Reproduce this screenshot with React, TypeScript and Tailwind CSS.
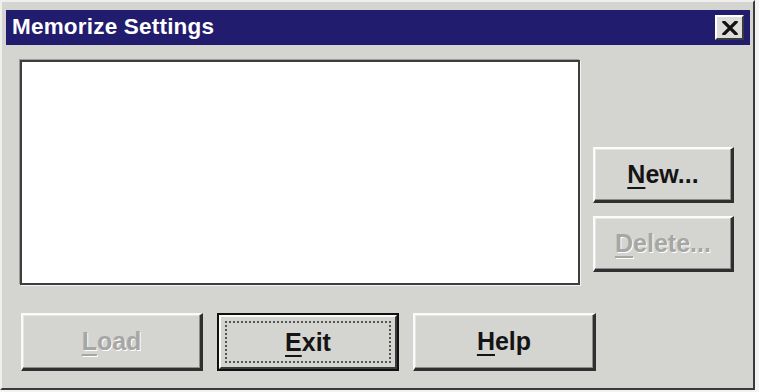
import React from "react";

const font = { fontFamily: '"Liberation Sans", Arial, sans-serif' };

function U({ ch }: { ch: string }) {
  return <span className="underline decoration-2 underline-offset-[4px]">{ch}</span>;
}

function Btn({
  first,
  rest,
  disabled,
  w,
  h,
}: {
  first: string;
  rest: string;
  disabled?: boolean;
  w: string;
  h: string;
}) {
  return (
    <div
      className={`${w} ${h} flex items-center justify-center bg-[#d4d4d0] border-t-2 border-l-2 border-t-[#fbfbfb] border-l-[#fbfbfb] border-r-[3px] border-b-[3px] border-r-[#2f2f2f] border-b-[#2f2f2f] shadow-[inset_-1px_-1px_0_#8c8c8c,inset_1px_1px_0_#e6e6e4]`}
    >
      <span
        className={`text-[25px] font-bold leading-none ${
          disabled ? "text-[#a6a6a4] [text-shadow:1px_1px_0_#ffffff]" : "text-[#141414]"
        }`}
        style={font}
      >
        <U ch={first} />
        {rest}
      </span>
    </div>
  );
}

export default function App() {
  return (
    <div className="w-[759px] h-[392px] bg-[#f3f3f1] overflow-hidden" style={font}>
      <div className="w-[755px] h-[390px] bg-[#d4d4d0] border-t-2 border-l-2 border-t-[#efefed] border-l-[#efefed] border-r-2 border-b-2 border-r-[#3a3a3a] border-b-[#3a3a3a] flex flex-col">
        {/* Title bar */}
        <div className="mt-[8px] ml-[4px] mr-[3px] h-[35px] bg-[#221c6e] flex items-center justify-between pl-[6px] pr-[6px]">
          <span className="text-white font-bold text-[22.5px] leading-none tracking-[0.2px]">
            Memorize Settings
          </span>
          <div className="w-[29px] h-[25px] bg-[#dcdcda] border-t-2 border-l-2 border-t-white border-l-white border-r-2 border-b-2 border-r-[#3a3a3a] border-b-[#3a3a3a] flex items-center justify-center">
            <svg width="16" height="14" viewBox="0 0 16 14">
              <path d="M2 1 L14 13 M14 1 L2 13" stroke="#111" strokeWidth="3.2" strokeLinecap="square" />
            </svg>
          </div>
        </div>

        {/* Body row */}
        <div className="flex mt-[15px] ml-[18px]">
          <div className="w-[560px] h-[225px] bg-white border-2 border-[#3e3e3e] shadow-[1px_1px_0_#f4f4f4,-1px_-1px_0_#9a9a9a]" />
          <div className="flex flex-col ml-[13px] pt-[87px] gap-[13px]">
            <Btn first="N" rest="ew..." w="w-[141px]" h="h-[56px]" />
            <Btn first="D" rest="elete..." disabled w="w-[141px]" h="h-[56px]" />
          </div>
        </div>

        {/* Bottom buttons */}
        <div className="flex mt-[28px] ml-[19px] gap-[14px]">
          <Btn first="L" rest="oad" disabled w="w-[182px]" h="h-[58px]" />
          <div className="w-[182px] h-[58px] border-[2px] border-[#101010] flex">
            <div className="flex-1 flex items-center justify-center bg-[#d4d4d0] border-t-2 border-l-2 border-t-[#fbfbfb] border-l-[#fbfbfb] border-r-2 border-b-2 border-r-[#3a3a3a] border-b-[#3a3a3a] p-[4px]">
              <div className="w-full h-full border-2 border-dotted border-[#555] flex items-center justify-center">
                <span className="text-[25px] font-bold leading-none text-[#141414]">
                  <U ch="E" />
                  xit
                </span>
              </div>
            </div>
          </div>
          <Btn first="H" rest="elp" w="w-[183px]" h="h-[58px]" />
        </div>
      </div>
    </div>
  );
}
